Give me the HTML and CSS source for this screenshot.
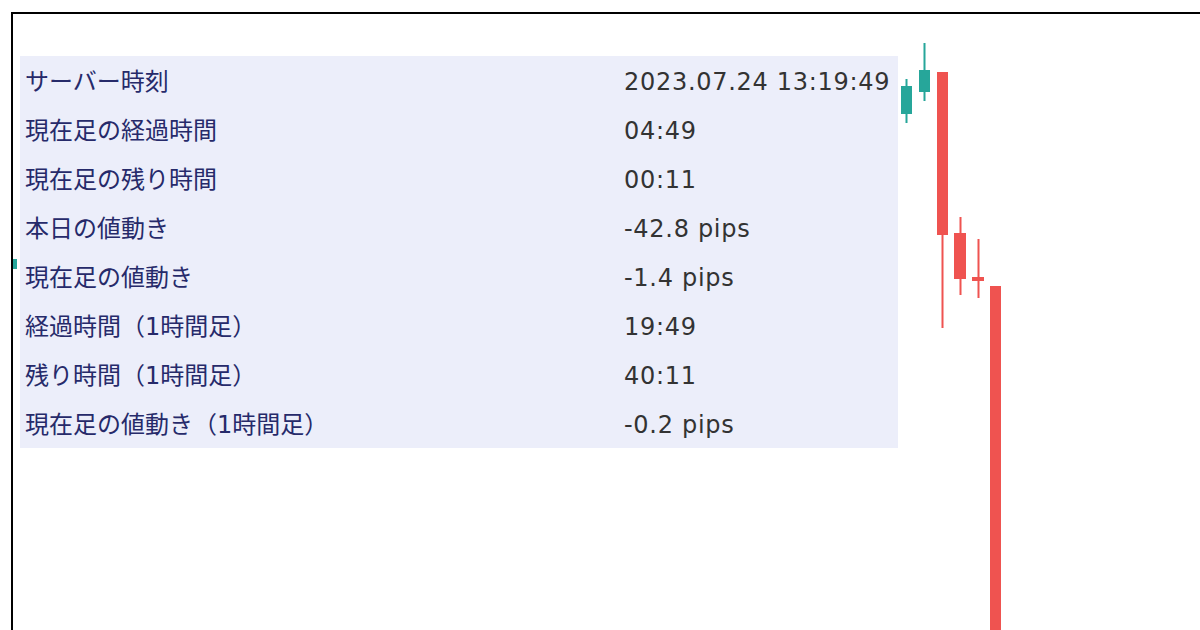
FILE: index.html
```html
<!DOCTYPE html>
<html lang="ja">
<head>
<meta charset="utf-8">
<link rel="stylesheet" href="styles.css">
</head>
<body>
<div class="frame">
  <svg class="chart" width="1200" height="630" viewBox="0 0 1200 630" xmlns="http://www.w3.org/2000/svg">
    <rect x="0" y="245" width="4" height="10" fill="#26a69a"/>
    <g fill="#26a69a">
      <rect x="892.5" y="65" width="2" height="44"/>
      <rect x="888" y="72" width="11" height="28"/>
      <rect x="910.5" y="29" width="2" height="58"/>
      <rect x="906" y="56" width="11" height="22"/>
    </g>
    <g fill="#ef5350">
      <rect x="928.5" y="58" width="2" height="256"/>
      <rect x="924" y="58" width="11" height="163"/>
      <rect x="946.5" y="203" width="2" height="78"/>
      <rect x="941" y="219" width="12" height="46"/>
      <rect x="964.5" y="225" width="2" height="59"/>
      <rect x="959" y="263" width="12" height="4"/>
      <rect x="977" y="272" width="11" height="360"/>
    </g>
  </svg>
  <div class="panel">
    <div class="row"><span class="label">サーバー時刻</span><span class="value">2023.07.24 13:19:49</span></div>
    <div class="row"><span class="label">現在足の経過時間</span><span class="value">04:49</span></div>
    <div class="row"><span class="label">現在足の残り時間</span><span class="value">00:11</span></div>
    <div class="row"><span class="label">本日の値動き</span><span class="value">-42.8 pips</span></div>
    <div class="row"><span class="label">現在足の値動き</span><span class="value">-1.4 pips</span></div>
    <div class="row"><span class="label">経過時間（1時間足）</span><span class="value">19:49</span></div>
    <div class="row"><span class="label">残り時間（1時間足）</span><span class="value">40:11</span></div>
    <div class="row"><span class="label">現在足の値動き（1時間足）</span><span class="value">-0.2 pips</span></div>
  </div>
</div>
</body>
</html>
```
FILE: styles.css
```css
html, body {
  margin: 0;
  padding: 0;
  background: #ffffff;
  overflow: hidden;
}
body {
  width: 1200px;
  height: 630px;
  font-family: "DejaVu Sans", "Noto Sans CJK JP", sans-serif;
}
.frame {
  position: relative;
  margin-left: 11px;
  margin-top: 12px;
  height: 640px;
  border-left: 2px solid #000;
  border-top: 2px solid #000;
  box-sizing: border-box;
  padding-left: 7px;
  padding-top: 42px;
}
.chart {
  position: absolute;
  left: 0;
  top: 0;
}
.panel {
  position: relative;
  width: 878px;
  background: #eceefa;
}
.row {
  display: grid;
  grid-template-columns: 599px 1fr;
  box-sizing: border-box;
  height: 49px;
  padding-top: 4px;
  line-height: 45px;
  font-size: 24px;
  padding-left: 5px;
  white-space: nowrap;
}
.label {
  color: #262a6a;
}
.value {
  color: #333333;
  letter-spacing: 0.7px;
}
```
